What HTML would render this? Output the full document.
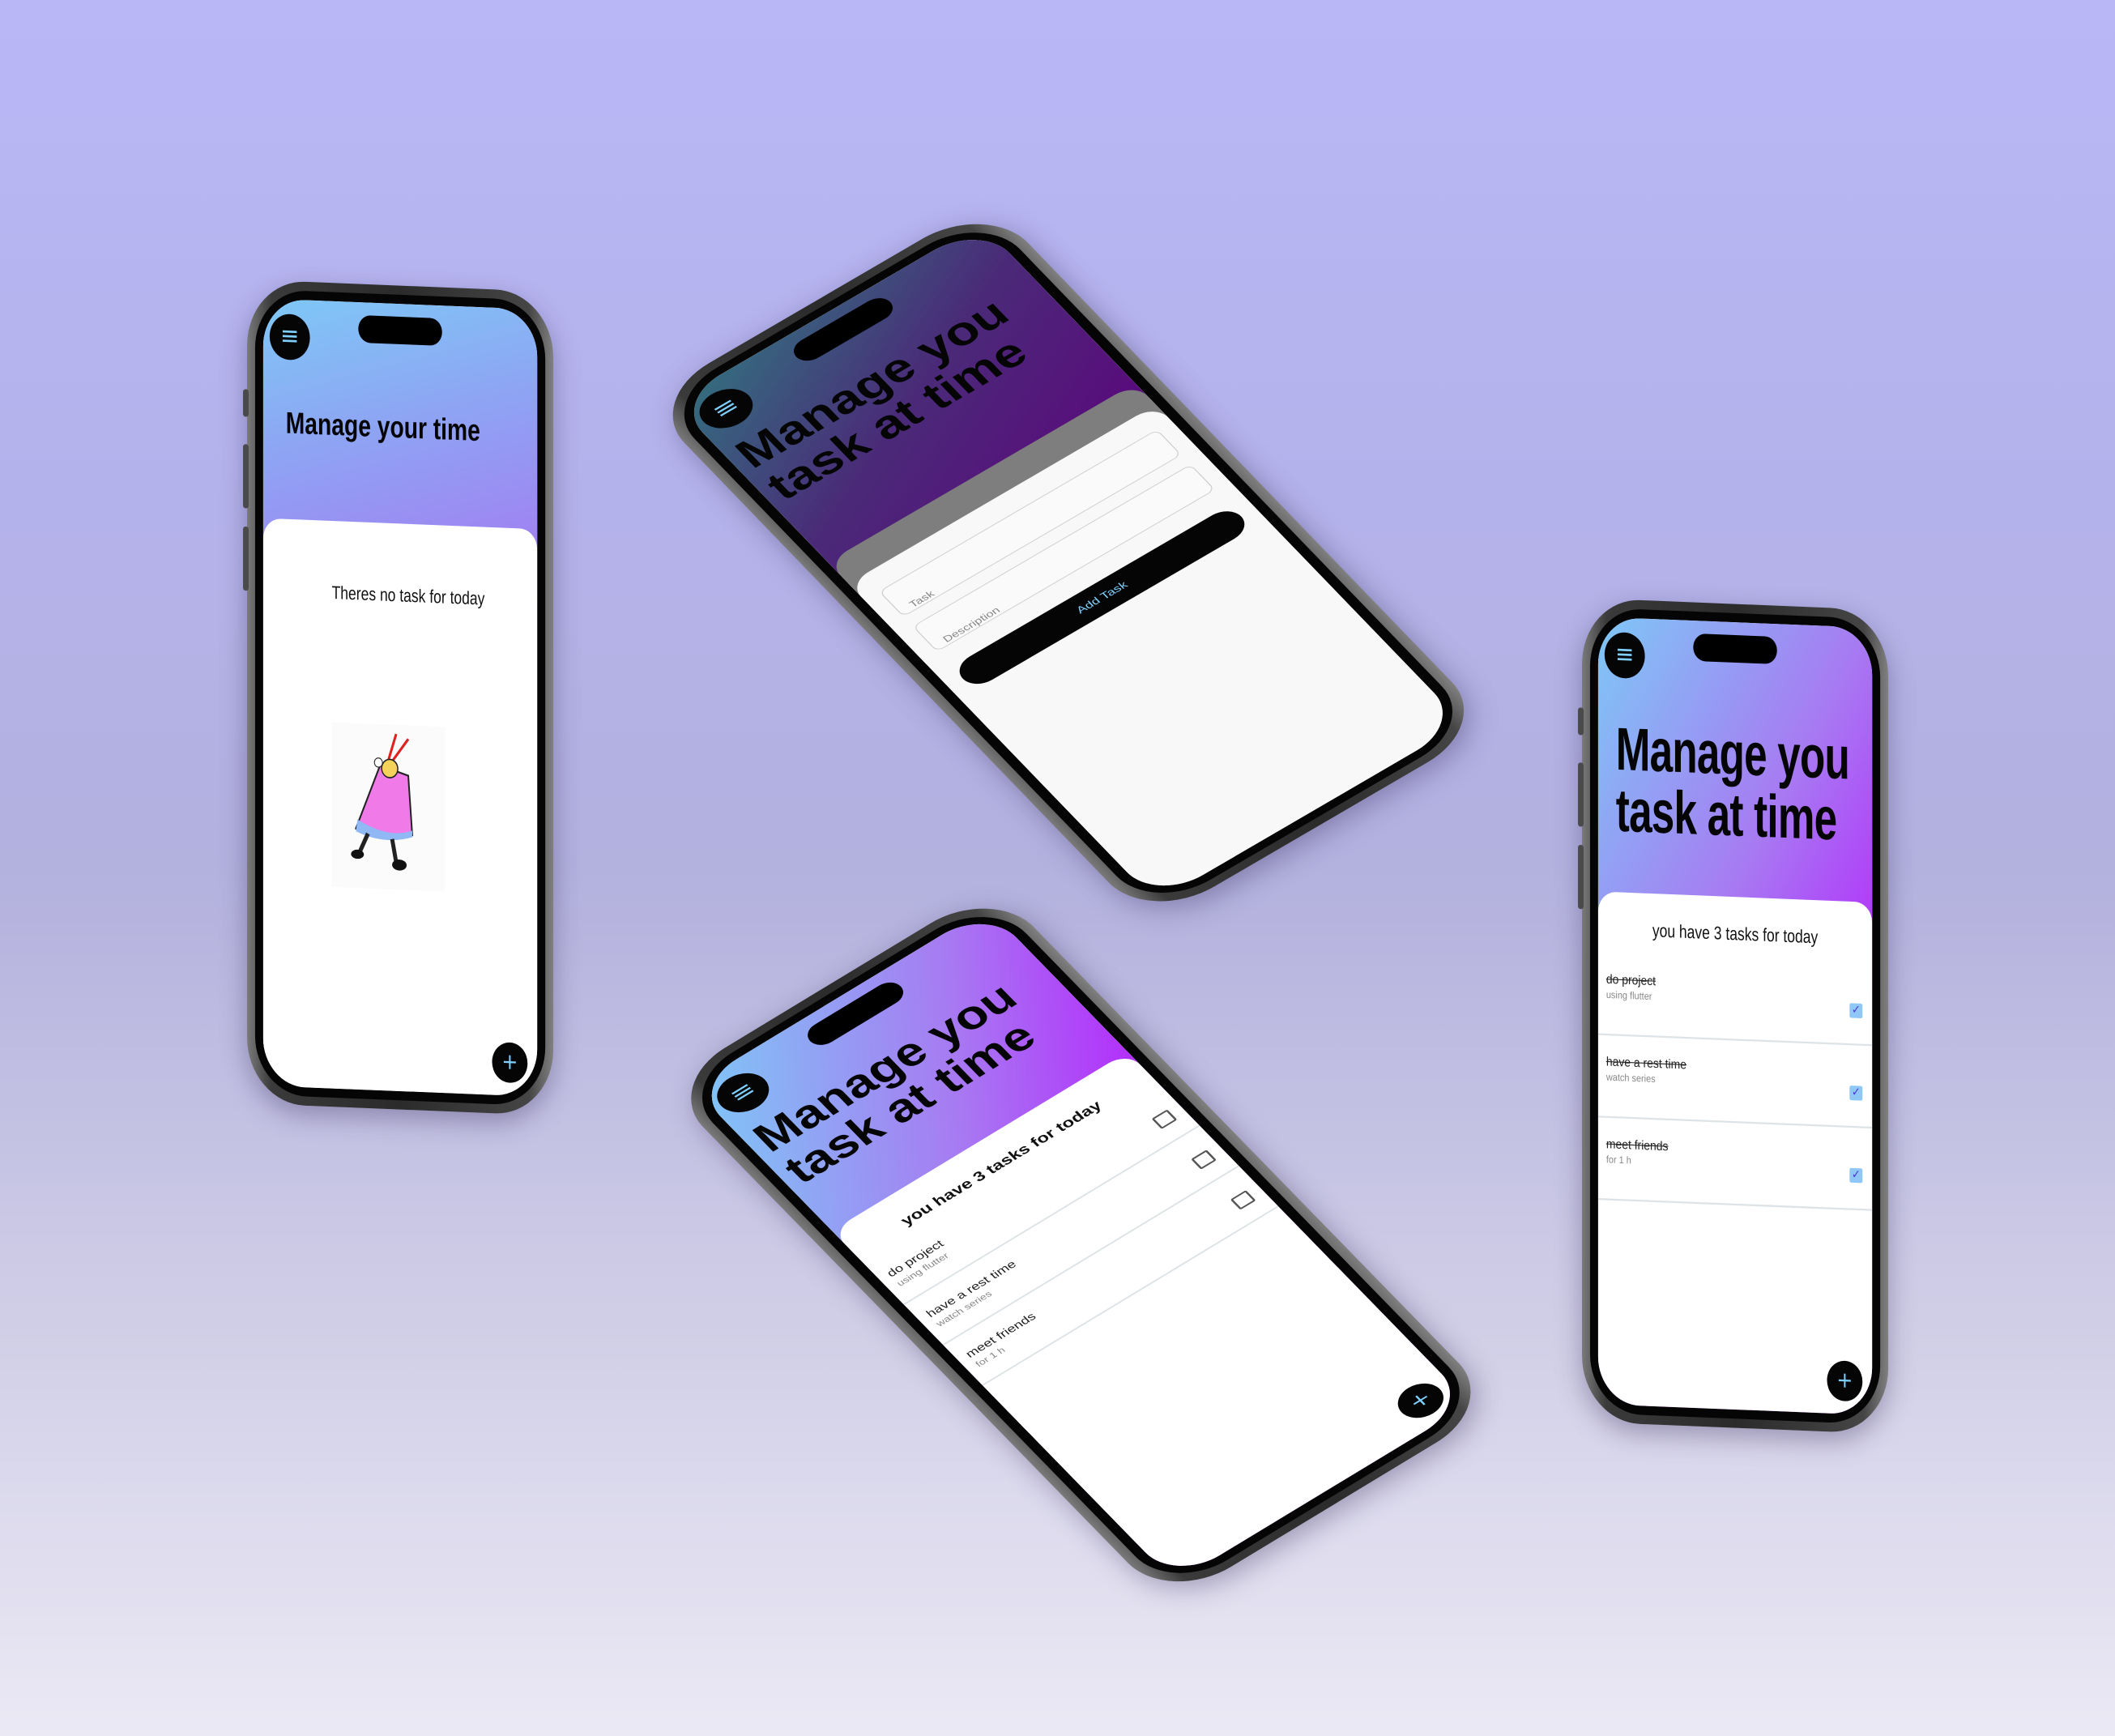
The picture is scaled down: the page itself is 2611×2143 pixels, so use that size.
<!DOCTYPE html>
<html><head><meta charset="utf-8">
<style>
html,body{margin:0;padding:0}
body{width:2611px;height:2143px;overflow:hidden;position:relative;
background:linear-gradient(180deg,#b9b7f6 0%,#b4b2ea 30%,#b3b1de 50%,#cfcde6 75%,#ebe9f4 100%);
font-family:"Liberation Sans Narrow","Liberation Sans",sans-serif;}
.phone{position:absolute;left:0;top:0;width:380px;height:900px;transform-origin:0 0;}
.frame{position:absolute;inset:0;border-radius:72px;background:linear-gradient(90deg,#7a7a7a,#3a3a3a 8%,#2b2b2b 50%,#454545 92%,#808080);box-shadow:0 10px 30px rgba(40,30,80,.35)}
.btn{position:absolute;left:-5px;width:7px;border-radius:3px;background:#4a4a4a}
.bez{position:absolute;inset:10px;border-radius:64px;background:#050505}
.screen{position:absolute;left:20px;top:20px;right:20px;bottom:20px;border-radius:52px;overflow:hidden;background:#fff}
.island{position:absolute;top:14px;left:50%;margin-left:-52px;width:104px;height:30px;border-radius:16px;background:#000}
.menu{position:absolute;left:8px;top:16px;width:50px;height:50px;border-radius:50%;background:#050505;color:#7fd0ff;font-size:28px;text-align:center;line-height:48px;font-family:"DejaVu Sans",sans-serif}
.title{position:absolute;left:10px;color:#050505;font-weight:bold;line-height:1.02;transform-origin:0 0;white-space:nowrap}
.card{position:absolute;left:0;right:0;bottom:0;background:#fff;border-radius:22px 22px 0 0}
.fab{position:absolute;right:12px;bottom:14px;width:44px;height:44px;border-radius:50%;background:#050505;color:#7fd0ff;text-align:center;line-height:42px;font-size:24px;font-family:"DejaVu Sans",sans-serif}
.item{position:absolute;left:0;right:0;height:80px;border-bottom:2px solid #dde3e6}
.item .t{position:absolute;left:10px;top:12px;font-size:14px;color:#222}
.item .s{position:absolute;left:10px;top:32px;font-size:11px;color:#888}
.cb{position:absolute;right:12px;top:24px;width:14px;height:14px;border:2px solid #555;border-radius:2px}
.cbk{position:absolute;right:12px;top:36px;width:16px;height:16px;background:#8fc8f7;border-radius:2px;color:#4a3cc8;font-size:13px;line-height:16px;text-align:center;font-family:"DejaVu Sans",sans-serif}
.inp{position:absolute;left:16px;right:16px;height:44px;border:1.5px solid #cfcfcf;border-radius:8px;background:#fafafa;font-family:"Liberation Sans",sans-serif;font-size:12px;color:#888;padding-left:12px;line-height:70px;box-sizing:border-box}
</style></head><body>

<!-- Phone 1 left -->
<div class="phone" style="transform:matrix(0.995,0.04,0,1.13,305,345)">
 <div class="frame"></div>
 <div class="btn" style="top:120px;height:30px"></div><div class="btn" style="top:180px;height:70px"></div><div class="btn" style="top:270px;height:70px"></div>
 <div class="bez"></div>
 <div class="screen">
  <div style="position:absolute;left:0;right:0;top:0;height:320px;background:linear-gradient(165deg,#7ec8f6 0%,#8fa2f3 45%,#a676f2 100%)"></div>
  <div class="island"></div>
  <div class="menu">≡</div>
  <div class="title" style="top:118px;left:28px;font-size:33px;transform:scaleX(0.86)">Manage your time</div>
  <div class="card" style="top:240px">
   <div style="position:absolute;top:68px;left:20px;right:0;text-align:center;font-size:20px;color:#111;transform:scaleX(0.88)">Theres no task for today</div>
   <svg style="position:absolute;left:85px;top:220px" width="140" height="180" viewBox="0 0 140 180">
    <rect x="0" y="0" width="140" height="180" fill="#fbfbfb"/>
    <line x1="70" y1="40" x2="80" y2="10" stroke="#d22" stroke-width="3"/>
    <line x1="75" y1="40" x2="95" y2="15" stroke="#d22" stroke-width="3"/>
    <path d="M60 45 L95 55 L100 120 Q70 130 30 115 Z" fill="#f07ae8" stroke="#222" stroke-width="2"/>
    <path d="M32 105 Q70 125 100 115 L100 122 Q65 132 30 118 Z" fill="#8fb8f5"/>
    <circle cx="72" cy="48" r="10" fill="#f5d25a" stroke="#222" stroke-width="1.5"/>
    <circle cx="58" cy="42" r="5" fill="#fff" stroke="#222"/>
    <path d="M45 120 L35 140 M75 125 L80 150" stroke="#222" stroke-width="5"/>
    <ellipse cx="32" cy="143" rx="8" ry="5" fill="#111"/><ellipse cx="84" cy="153" rx="9" ry="6" fill="#111"/>
   </svg>
  </div>
  <div class="fab">+</div>
 </div>
</div>

<!-- Phone 4 right -->
<div class="phone" style="transform:matrix(0.995,0.04,0,1.13,1953,738)">
 <div class="frame"></div>
 <div class="btn" style="top:120px;height:30px"></div><div class="btn" style="top:180px;height:70px"></div><div class="btn" style="top:270px;height:70px"></div>
 <div class="bez"></div>
 <div class="screen">
  <div style="position:absolute;inset:0;background:linear-gradient(120deg,#7ec8f6 0%,#a77af2 40%,#b80cff 80%)"></div>
  <div class="island"></div>
  <div class="menu">≡</div>
  <div class="title" style="top:110px;left:22px;font-size:66px;letter-spacing:-1px;transform:scaleX(0.78)">Manage you<br>task at time</div>
  <div class="card" style="top:300px">
   <div style="position:absolute;top:30px;left:0;right:0;text-align:center;font-size:20px;color:#111;transform:scaleX(0.88)">you have 3 tasks for today</div>
   <div class="item" style="top:75px"><div class="t" style="text-decoration:line-through">do project</div><div class="s">using flutter</div><div class="cbk">✓</div></div>
   <div class="item" style="top:165px"><div class="t" style="text-decoration:line-through">have a rest time</div><div class="s">watch series</div><div class="cbk">✓</div></div>
   <div class="item" style="top:255px"><div class="t" style="text-decoration:line-through">meet friends</div><div class="s">for 1 h</div><div class="cbk">✓</div></div>
  </div>
  <div class="fab">+</div>
 </div>
</div>

<!-- Phone 2 top middle -->
<div class="phone" style="transform:matrix(1.116,-0.65,0.693,0.718,795,495)">
 <div class="frame"></div><div class="bez"></div>
 <div class="screen" style="background:#f8f8f8">
  <div style="position:absolute;left:0;right:0;top:0;height:300px;background:linear-gradient(150deg,#33707f 0%,#4a2a78 50%,#5a0a7c 100%)"></div>
  <div class="island"></div>
  <div class="menu">≡</div>
  <div class="title" style="top:80px;font-size:54px;font-family:'Liberation Sans',sans-serif;transform:scaleX(0.92)">Manage you<br>task at time</div>
  <div style="position:absolute;left:0;right:0;top:275px;height:60px;background:#7e7e7e;border-radius:22px 22px 0 0"></div>
  <div style="position:absolute;left:0;right:0;top:312px;bottom:0;background:#f8f8f8;border-radius:22px 22px 0 0"></div>
  <div class="inp" style="top:340px">Task</div>
  <div class="inp" style="top:400px">Description</div>
  <div style="position:absolute;left:16px;right:16px;top:470px;height:40px;background:#050505;border-radius:20px;color:#7fd0ff;text-align:center;line-height:40px;font-size:13px;font-family:'Liberation Sans',sans-serif">Add Task</div>
 </div>
</div>

<!-- Phone 3 bottom middle -->
<div class="phone" style="transform:matrix(1.074,-0.65,0.694,0.712,818,1340)">
 <div class="frame"></div><div class="bez"></div>
 <div class="screen">
  <div style="position:absolute;inset:0;background:linear-gradient(120deg,#7ec8f6 0%,#a77af2 35%,#b80cff 70%)"></div>
  <div class="island"></div>
  <div class="menu">≡</div>
  <div class="title" style="top:80px;font-size:54px;font-family:'Liberation Sans',sans-serif;transform:scaleX(0.92)">Manage you<br>task at time</div>
  <div class="card" style="top:250px;font-family:'Liberation Sans',sans-serif">
   <div style="position:absolute;top:28px;left:0;right:0;text-align:center;font-size:18px;font-weight:bold;color:#111">you have 3 tasks for today</div>
   <div class="item" style="top:65px;height:62px"><div class="t">do project</div><div class="s">using flutter</div><div class="cb"></div></div>
   <div class="item" style="top:135px;height:62px"><div class="t">have a rest time</div><div class="s">watch series</div><div class="cb"></div></div>
   <div class="item" style="top:205px;height:62px"><div class="t">meet friends</div><div class="s">for 1 h</div><div class="cb"></div></div>
  </div>
  <div class="fab">+</div>
 </div>
</div>

</body></html>
